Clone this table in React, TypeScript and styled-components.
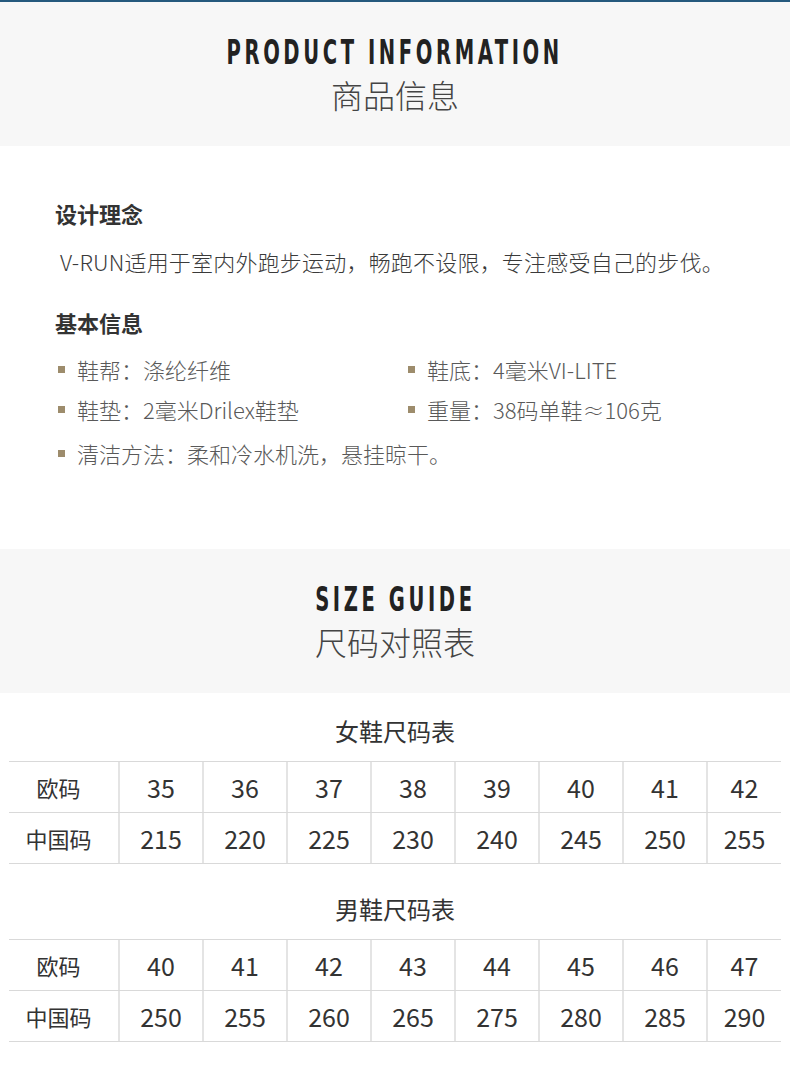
import React from 'react'
import styled, { createGlobalStyle } from 'styled-components'

const GlobalStyle = createGlobalStyle`
  body {
    margin: 0;
    background: #fff;
    font-family: "Noto Sans CJK SC", "Noto Sans", sans-serif;
    color: #333;
  }
`

const Page = styled.div`
  width: 790px;
  min-height: 1079px;
  background: #fff;
`

const TopLine = styled.div`
  height: 2px;
  background: #25597d;
`

const Banner = styled.div`
  height: 144px;
  background: #f7f7f7;
  display: flex;
  flex-direction: column;
  align-items: center;
  justify-content: center;
`

// narrow display face isn't installed, so squeeze the condensed bold
const BannerTitle = styled.h1`
  margin: 0;
  font-family: "DejaVu Sans Condensed", "Liberation Sans", sans-serif;
  font-weight: 700;
  font-size: 34px;
  line-height: 34px;
  letter-spacing: 5.6px;
  color: #222;
  transform: scaleX(0.64);
`

const BannerSub = styled.div`
  margin-top: 5px;
  font-size: 32px;
  line-height: 40px;
  font-weight: 300;
  color: #444;
`

const InfoSection = styled.section`
  padding: 51px 55px 81px;
`

const Heading = styled.h3<{ $top?: number }>`
  margin: ${p => p.$top ?? 0}px 0 0;
  font-size: 22px;
  line-height: 33px;
  font-weight: 700;
  color: #333;
`

const Intro = styled.p`
  margin: 15px 0 0;
  padding-left: 5px;
  font-size: 22px;
  line-height: 33px;
  font-weight: 300;
  letter-spacing: 0.2px;
  color: #3a3a3a;
`

const InfoList = styled.ul`
  list-style: none;
  margin: 15px 0 0;
  padding: 0 0 0 3px;
  display: grid;
  grid-template-columns: 350px 1fr;
  row-gap: 10px;
`

const InfoItem = styled.li<{ $wide?: boolean }>`
  display: flex;
  align-items: center;
  font-size: 22px;
  line-height: 30px;
  font-weight: 300;
  color: #595959;
  ${p => p.$wide && 'grid-column: 1 / -1; margin-top: 4px;'}
  &::before {
    content: '';
    width: 7px;
    height: 7px;
    margin-right: 12px;
    background: #9d8c6c;
    flex-shrink: 0;
  }
`

const SizeBlock = styled.div<{ $top: number }>`
  padding-top: ${p => p.$top}px;
`

const TableTitle = styled.div`
  text-align: center;
  font-size: 24px;
  line-height: 34px;
  color: #333;
  margin-bottom: 13px;
`

const Table = styled.div`
  margin: 0 9px;
  border-top: 1px solid #d9d9d9;
`

const Row = styled.div`
  display: grid;
  grid-template-columns: 109px repeat(7, 84px) 1fr;
  border-bottom: 1px solid #d9d9d9;
`

const Cell = styled.div<{ $label?: boolean }>`
  height: 50px;
  display: flex;
  align-items: center;
  justify-content: center;
  font-size: ${p => (p.$label ? 22 : 25)}px;
  color: #333;
  border-left: 2px solid #e4e4e4;
  ${p => p.$label && 'border-left: none; padding-right: 10px;'}
`

type SizeTable = { title: string; eu: number[]; cn: number[] }

const tables: SizeTable[] = [
  { title: '女鞋尺码表', eu: [35, 36, 37, 38, 39, 40, 41, 42], cn: [215, 220, 225, 230, 240, 245, 250, 255] },
  { title: '男鞋尺码表', eu: [40, 41, 42, 43, 44, 45, 46, 47], cn: [250, 255, 260, 265, 275, 280, 285, 290] },
]

const App: React.FC = () => {
  return (
    <>
      <GlobalStyle />
      <Page>
        <TopLine />
        <Banner>
          <BannerTitle>PRODUCT INFORMATION</BannerTitle>
          <BannerSub>商品信息</BannerSub>
        </Banner>

        <InfoSection>
          <Heading>设计理念</Heading>
          <Intro>V-RUN适用于室内外跑步运动，畅跑不设限，专注感受自己的步伐。</Intro>
          <Heading $top={28}>基本信息</Heading>
          <InfoList>
            <InfoItem>鞋帮：涤纶纤维</InfoItem>
            <InfoItem>鞋底：4毫米VI-LITE</InfoItem>
            <InfoItem>鞋垫：2毫米Drilex鞋垫</InfoItem>
            <InfoItem>重量：38码单鞋≈106克</InfoItem>
            <InfoItem $wide>清洁方法：柔和冷水机洗，悬挂晾干。</InfoItem>
          </InfoList>
        </InfoSection>

        <Banner>
          <BannerTitle>SIZE GUIDE</BannerTitle>
          <BannerSub>尺码对照表</BannerSub>
        </Banner>

        {tables.map((t, i) => (
          <SizeBlock key={t.title} $top={i === 0 ? 21 : 28}>
            <TableTitle>{t.title}</TableTitle>
            <Table>
              <Row>
                <Cell $label>欧码</Cell>
                {t.eu.map(n => <Cell key={n}>{n}</Cell>)}
              </Row>
              <Row>
                <Cell $label>中国码</Cell>
                {t.cn.map(n => <Cell key={n}>{n}</Cell>)}
              </Row>
            </Table>
          </SizeBlock>
        ))}
      </Page>
    </>
  )
}

export default App
